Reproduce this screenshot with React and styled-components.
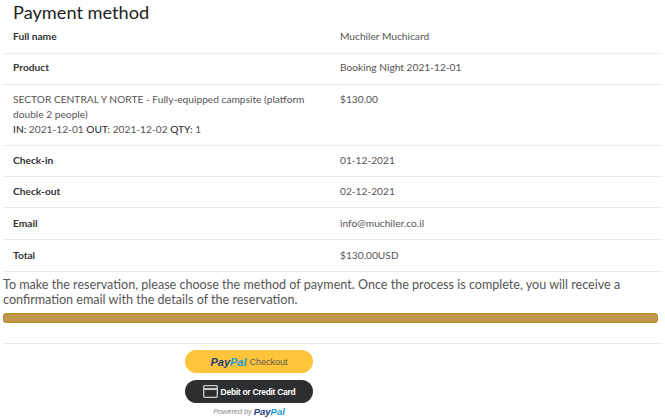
import React from 'react';
import styled, { createGlobalStyle } from 'styled-components';

const GlobalStyle = createGlobalStyle`
  html, body { margin: 0; padding: 0; background: #fff; overflow: hidden; }
  body { font-family: Lato, sans-serif; color: #555; }
`;

const Page = styled.div`
  width: 665px;
  height: 419px;
  overflow: hidden;
  padding: 0 3px;
  box-sizing: border-box;
`;

const Title = styled.h2`
  margin: 0;
  padding: 1px 0 0 10px;
  font-size: 18.2px;
  line-height: 23px;
  font-weight: 400;
  color: #222;
`;

const Row = styled.div`
  display: grid;
  grid-template-columns: 327px 1fr;
  box-sizing: border-box;
  height: ${p => p.$h}px;
  padding: ${p => p.$top}px 10px 0;
  border-bottom: 1px solid #eaeaea;
  font-size: 10.2px;
  line-height: 15px;
`;

const Label = styled.div`
  font-weight: 700;
  color: #333;
`;

const Value = styled.div`
  color: #555;
`;

const ProductValue = styled(Value)`
  padding-right: 20px;
`;

const Strong = styled.span`
  color: #333;
  font-weight: 500;
`;

const Notice = styled.p`
  margin: 0;
  padding-top: 5px;
  font-size: 12.58px;
  line-height: 15px;
  color: #555;
`;

const Bar = styled.div`
  height: 10px;
  margin: 6px 4px 0 0;
  background: #bf9750;
  border: 1px solid #b98f1f;
  border-radius: 3px;
  box-sizing: border-box;
`;

const Divider = styled.hr`
  margin: 20px 0 0;
  border: 0;
  border-top: 1px solid #eaeaea;
`;

const PayColumn = styled.div`
  width: 128px;
  margin: 6px 0 0 182px;
  display: flex;
  flex-direction: column;
  align-items: center;
`;

const PayButton = styled.div`
  width: 128px;
  height: 23px;
  border-radius: 12px;
  display: flex;
  align-items: center;
  justify-content: center;
  gap: ${p => p.$gap}px;
  background: ${p => p.$bg};
  margin-bottom: 7px;
  font-family: "Liberation Sans", Arial, sans-serif;
  font-size: 9px;
`;

const Brand = styled.span`
  font-family: "Liberation Sans", Arial, sans-serif;
  font-weight: 700;
  font-style: italic;
  font-size: ${p => p.$size}px;
  color: #253b80;
`;

const BrandEnd = styled.span`
  color: #179bd7;
`;

const CheckoutText = styled.span`
  color: #555;
`;

const CardText = styled.span`
  color: #fff;
  font-weight: 700;
  font-size: 8.5px;
  letter-spacing: -0.3px;
`;

const Powered = styled.div`
  display: flex;
  align-items: center;
  gap: 2px;
  margin-top: -4px;
  font-family: "Liberation Sans", Arial, sans-serif;
  font-style: italic;
  font-size: 7.3px;
  color: #888;
`;

const CardIcon = () => (
  <svg width="15" height="13" viewBox="0 0 15 13">
    <rect x="0.7" y="0.7" width="13.6" height="11.6" rx="1" fill="none" stroke="#ccc" strokeWidth="1.3" />
    <rect x="1" y="3" width="13" height="2" fill="#ccc" />
  </svg>
);

const rows = [
  { label: 'Full name', value: 'Muchiler Muchicard', h: 30, top: 5 },
  { label: 'Product', value: 'Booking Night 2021-12-01', h: 31, top: 6 },
  { label: 'Check-in', value: '01-12-2021', h: 31, top: 7 },
  { label: 'Check-out', value: '02-12-2021', h: 31, top: 7 },
  { label: 'Email', value: 'info@muchiler.co.il', h: 32, top: 8 },
  { label: 'Total', value: '$130.00USD', h: 32, top: 8 },
];

const InfoRow = ({ row }) => (
  <Row $h={row.h} $top={row.top}>
    <Label>{row.label}</Label>
    <Value>{row.value}</Value>
  </Row>
);

export default function App() {
  return (
    <Page>
      <GlobalStyle />
      <Title>Payment method</Title>
      <InfoRow row={rows[0]} />
      <InfoRow row={rows[1]} />
      <Row $h={61} $top={7}>
        <ProductValue>
          SECTOR CENTRAL Y NORTE - Fully-equipped campsite (platform double 2 people)
          <br />
          <Strong>IN:</Strong> 2021-12-01 <Strong>OUT:</Strong> 2021-12-02 <Strong>QTY:</Strong> 1
        </ProductValue>
        <Value>$130.00</Value>
      </Row>
      {rows.slice(2).map(row => <InfoRow key={row.label} row={row} />)}
      <Notice>
        To make the reservation, please choose the method of payment. Once the process is complete, you will receive a confirmation email with the details of the reservation.
      </Notice>
      <Bar />
      <Divider />
      <PayColumn>
        <PayButton $bg="#ffc439" $gap={3}>
          <Brand $size={11}>Pay<BrandEnd>Pal</BrandEnd></Brand>
          <CheckoutText>Checkout</CheckoutText>
        </PayButton>
        <PayButton $bg="#2c2e2f" $gap={3}>
          <CardIcon />
          <CardText>Debit or Credit Card</CardText>
        </PayButton>
        <Powered>
          Powered by <Brand $size={9.5}>Pay<BrandEnd>Pal</BrandEnd></Brand>
        </Powered>
      </PayColumn>
    </Page>
  );
}
